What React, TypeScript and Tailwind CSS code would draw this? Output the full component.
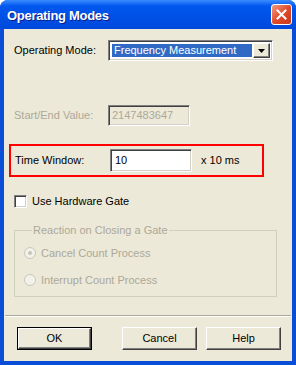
import React from "react";

const sunken =
  "border border-t-[#808080] border-l-[#808080] border-b-white border-r-white shadow-[inset_1px_1px_0_#404040,inset_-1px_-1px_0_#d4d0c8]";
const raised =
  "border border-t-white border-l-white border-b-[#404040] border-r-[#404040] shadow-[inset_-1px_-1px_0_#808080]";

function Button({ label, isDefault }: { label: string; isDefault?: boolean }) {
  return (
    <div className={`w-[75px] h-[23px] ${isDefault ? "border border-black" : ""}`}>
      <div className={`w-full h-full flex items-center justify-center bg-[#ECE9D8] text-black ${raised}`}>
        {label}
      </div>
    </div>
  );
}

function Radio({ checked, label }: { checked?: boolean; label: string }) {
  return (
    <div className="flex items-center h-[14px]">
      <div className="w-[12px] h-[12px] rounded-full border border-[#CAC8BB] bg-[#F2F1EA] flex items-center justify-center">
        {checked && <div className="w-[4px] h-[4px] rounded-full bg-[#C8C6B8]" />}
      </div>
      <span className="ml-[5px] text-[#ACA899]">{label}</span>
    </div>
  );
}

export default function App() {
  return (
    <div
      className="w-[296px] h-[365px] flex flex-col rounded-t-[8px] bg-[#0A4ED8] text-[11px] leading-[13px] text-black"
      style={{ fontFamily: "'Liberation Sans', Arial, sans-serif" }}>
      {/* Title bar */}
      <div className="h-[29px] shrink-0 flex items-center justify-between pl-[7px] pr-[4px] rounded-t-[8px] bg-gradient-to-b from-[#3A8CFF] via-[#0058EE] via-20% to-[#0048DC]">
        <span className="text-white font-bold text-[13px] tracking-[-0.3px] [text-shadow:1px_1px_0_#0A1E8A] mt-[1px]">
          Operating Modes
        </span>
        <div className="w-[21px] h-[21px] rounded-[3px] border border-white bg-gradient-to-br from-[#F09A80] via-[#E04A2A] to-[#C8391C] flex items-center justify-center">
          <svg width="11" height="11" viewBox="0 0 11 11">
            <path d="M1.5 1.5 L9.5 9.5 M9.5 1.5 L1.5 9.5" stroke="white" strokeWidth="2" strokeLinecap="square" />
          </svg>
        </div>
      </div>

      {/* Client area */}
      <div className="flex-1 ml-[4px] mr-[4px] mb-[4px] bg-[#ECE9D8] flex flex-col">
        {/* Operating mode */}
        <div className="flex items-center h-[21px] mt-[11px] pl-[10px]">
          <span className="w-[94px]">Operating Mode:</span>
          <div className={`w-[165px] h-[21px] bg-white flex items-stretch p-[2px] ${sunken}`}>
            <div className="flex-1 flex items-center pl-[2px] bg-[#316AC5] text-white my-[1px] ml-[1px] mr-[1px]">
              Frequency Measurement
            </div>
            <div className={`w-[17px] bg-[#ECE9D8] flex items-center justify-center ${raised}`}>
              <svg width="7" height="4" viewBox="0 0 7 4">
                <path d="M0 0 H7 L3.5 4 Z" fill="black" />
              </svg>
            </div>
          </div>
        </div>

        {/* Start/End value */}
        <div className="flex items-center h-[21px] mt-[44px] pl-[10px]">
          <span className="w-[94px] text-[#ACA899]">Start/End Value:</span>
          <div className={`w-[82px] h-[21px] flex items-center pl-[3px] text-[#ACA899] bg-[#ECE9D8] ${sunken}`}>
            2147483647
          </div>
        </div>

        {/* Time window */}
        <div className="ml-[5px] mt-[18px] w-[255px] h-[33px] border-2 border-[#FF0000] flex items-center pl-[4px]">
          <span className="w-[95px]">Time Window:</span>
          <div className={`w-[82px] h-[23px] flex items-center pl-[4px] bg-white ${sunken}`}>10</div>
          <span className="ml-[9px]">x 10 ms</span>
        </div>

        {/* Hardware gate */}
        <div className="flex items-center h-[13px] mt-[18px] pl-[10px]">
          <div className={`w-[13px] h-[13px] bg-white ${sunken}`} />
          <span className="ml-[5px]">Use Hardware Gate</span>
        </div>

        {/* Group box */}
        <fieldset className="ml-[10px] mt-[16px] w-[263px] h-[73px] border border-[#D0D0BF] pl-[9px]">
          <legend className="ml-[8px] px-[1px] text-[#ACA899]">Reaction on Closing a Gate</legend>
          <div className="flex flex-col gap-[13px] mt-[9px]">
            <Radio checked label="Cancel Count Process" />
            <Radio label="Interrupt Count Process" />
          </div>
        </fieldset>

        {/* Separator */}
        <div className="mx-[1px] mt-[18px] h-[2px] border-t border-t-[#ACA899] border-b border-b-white" />

        {/* Buttons */}
        <div className="flex mt-[10px] pl-[13px]">
          <Button label="OK" isDefault />
          <div className="ml-[30px]">
            <Button label="Cancel" />
          </div>
          <div className="ml-[9px]">
            <Button label="Help" />
          </div>
        </div>
      </div>
    </div>
  );
}
